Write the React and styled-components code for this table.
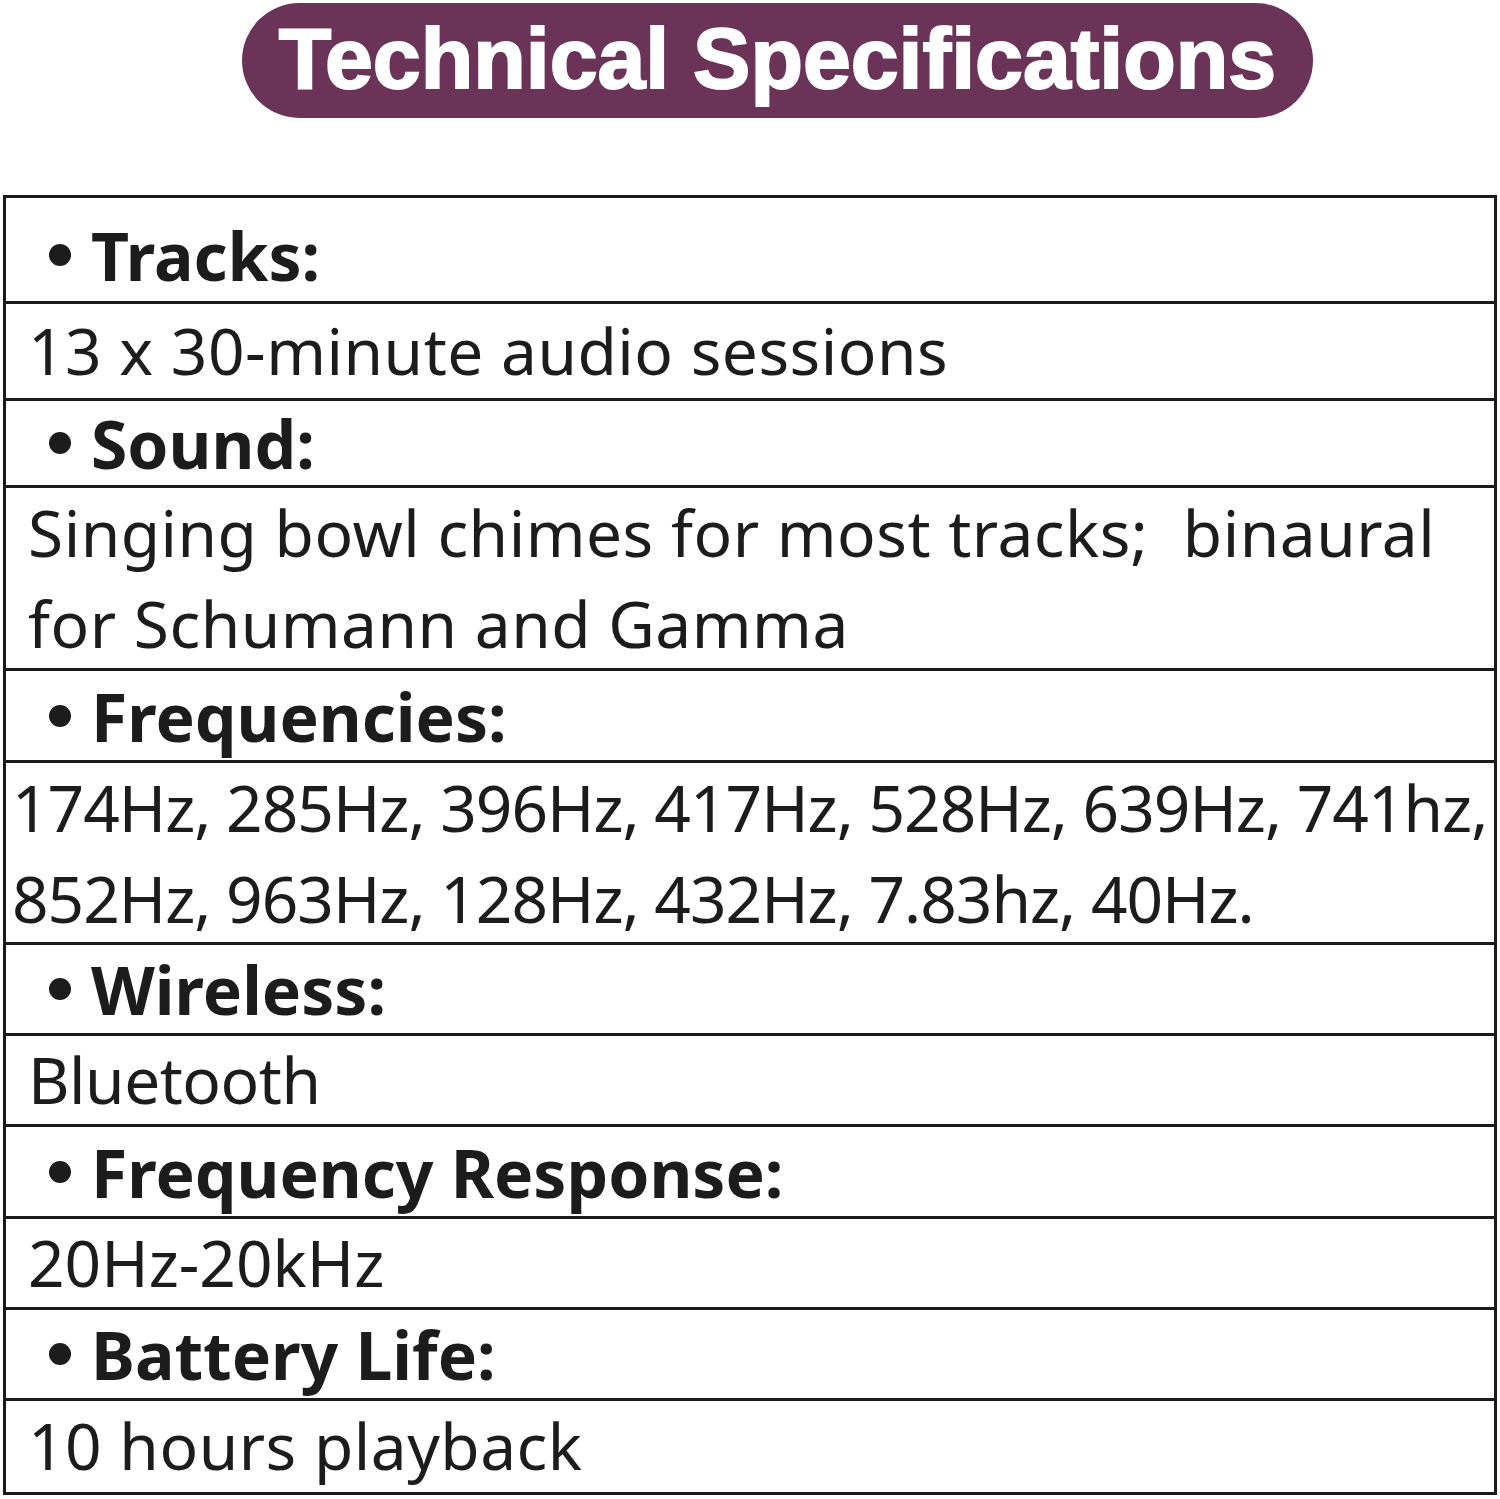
import React from "react";
import styled, { createGlobalStyle } from "styled-components";

const GlobalStyle = createGlobalStyle`
  body {
    margin: 0;
    background: #ffffff;
    font-family: "Noto Sans", "Liberation Sans", sans-serif;
    color: #1c1c1c;
  }
`;

const Page = styled.div`
  width: 1500px;
  height: 1499px;
  overflow: hidden;
  padding-top: 3px;
  box-sizing: border-box;
`;

const TitleWrap = styled.div`
  display: flex;
  padding-left: 242px;
`;

const TitlePill = styled.h1`
  margin: 0;
  width: 1071px;
  height: 115px;
  border-radius: 58px;
  background: #6a3357;
  color: #ffffff;
  display: flex;
  align-items: center;
  justify-content: center;
  font-family: "Liberation Sans", Arial, sans-serif;
  font-weight: 700;
  font-size: 86px;
  letter-spacing: 0px;
  -webkit-text-stroke: 2px #ffffff;
  padding: 0 0 4px 0;
  box-sizing: border-box;
`;

const Table = styled.div`
  margin: 77px 0 0 3px;
  width: 1494px;
  border: 3px solid #1a1a1a;
  box-sizing: border-box;
  display: flex;
  flex-direction: column;
`;

const Row = styled.div`
  height: ${(p) => p.$h}px;
  box-sizing: border-box;
  display: flex;
  align-items: center;
  border-top: ${(p) => (p.$first ? "none" : "3px solid #1a1a1a")};
  padding-top: ${(p) => p.$pt || 0}px;
`;

const Label = styled.div`
  display: flex;
  align-items: center;
  padding-left: 43px;
  font-weight: 700;
  font-size: 66px;
  line-height: 1;
  letter-spacing: 0px;
  color: #1c1c1c;
`;

const Bullet = styled.span`
  width: 22px;
  height: 22px;
  border-radius: 50%;
  background: #1c1c1c;
  margin-right: 20px;
  flex: none;
`;

const Value = styled.div`
  padding-left: ${(p) => p.$pl ?? 22}px;
  font-weight: 400;
  font-size: ${(p) => p.$fs || 64}px;
  line-height: ${(p) => p.$lh || 1.2};
  letter-spacing: ${(p) => p.$ls ?? 0.5}px;
  white-space: pre;
  color: #1c1c1c;
`;

const specs = [
  { label: "Tracks:", lh: 103, pt: 10, vh: 97, value: ["13 x 30-minute audio sessions"] },
  {
    label: "Sound:",
    lh: 87,
    vh: 183,
    value: ["Singing bowl chimes for most tracks;  binaural", "for Schumann and Gamma"],
    vlh: 91,
  },
  {
    label: "Frequencies:",
    lh: 92,
    vh: 182,
    value: [
      "174Hz, 285Hz, 396Hz, 417Hz, 528Hz, 639Hz, 741hz,",
      "852Hz, 963Hz, 128Hz, 432Hz, 7.83hz, 40Hz.",
    ],
    vlh: 91,
    pl: 6,
    ls: -1,
  },
  { label: "Wireless:", lh: 91, vh: 91, value: ["Bluetooth"], ls: -0.5 },
  { label: "Frequency Response:", lh: 92, vh: 91, value: ["20Hz-20kHz"], ls: 0 },
  { label: "Battery Life:", lh: 91, vh: 94, value: ["10 hours playback"] },
];

export default function App() {
  return (
    <Page>
      <GlobalStyle />
      <TitleWrap>
        <TitlePill>Technical Specifications</TitlePill>
      </TitleWrap>
      <Table>
        {specs.map((s, i) => (
          <React.Fragment key={s.label}>
            <Row $h={s.lh} $first={i === 0} $pt={s.pt}>
              <Label>
                <Bullet />
                {s.label}
              </Label>
            </Row>
            <Row $h={s.vh}>
              <Value $pl={s.pl} $ls={s.ls} $lh={s.vlh ? s.vlh / 64 : 1.2}>
                {s.value.map((line, j) => (
                  <div key={j}>{line}</div>
                ))}
              </Value>
            </Row>
          </React.Fragment>
        ))}
      </Table>
    </Page>
  );
}
